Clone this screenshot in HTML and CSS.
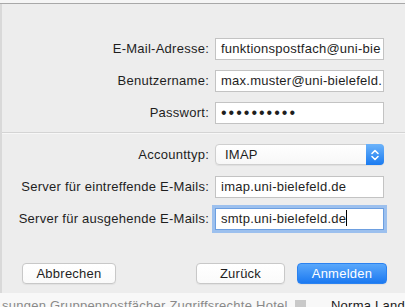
FILE: index.html
```html
<!DOCTYPE html>
<html lang="de">
<head>
  <meta charset="UTF-8">
  <title>Mail-Account hinzufügen</title>
  <link rel="stylesheet" href="styles.css">
</head>
<body>
  <div class="top-edge"></div>

  <!-- Account sheet -->
  <div class="sheet">
    <div class="form">
      <label class="label">E-Mail-Adresse:</label>
      <div class="field">funktionspostfach@uni-bie</div>

      <label class="label">Benutzername:</label>
      <div class="field">max.muster@uni-bielefeld.</div>

      <label class="label">Passwort:</label>
      <div class="field dots">••••••••••</div>
    </div>

    <div class="separator"></div>

    <div class="form">
      <label class="label">Accounttyp:</label>
      <div class="popup">
        <span>IMAP</span>
        <span class="stepper">
          <svg width="10" height="14" viewBox="0 0 10 14">
            <path d="M2 5.5 L5 2.5 L8 5.5 M2 8.5 L5 11.5 L8 8.5" fill="none" stroke="#fff" stroke-width="1.6" stroke-linecap="round" stroke-linejoin="round"/>
          </svg>
        </span>
      </div>

      <label class="label">Server für eintreffende E-Mails:</label>
      <div class="field">imap.uni-bielefeld.de</div>

      <label class="label">Server für ausgehende E-Mails:</label>
      <div class="field focused">smtp.uni-bielefeld.de<span class="caret"></span></div>
    </div>

    <div class="buttons">
      <button class="btn">Abbrechen</button>
      <div class="spacer"></div>
      <button class="btn">Zurück</button>
      <button class="btn primary">Anmelden</button>
    </div>
  </div>

  <!-- Window behind the sheet -->
  <div class="behind">
    <span class="behind-text">sungen Gruppenpostfächer Zugriffsrechte  Hotel</span>
    <span class="behind-box"></span>
    <span class="behind-name">Norma Land</span>
  </div>
</body>
</html>
```

FILE: styles.css
```css
/* Base */
* {
  margin: 0;
  padding: 0;
  box-sizing: border-box;
}

body {
  width: 405px;
  height: 307px;
  overflow: hidden;
  font-family: "Liberation Sans", Arial, sans-serif;
  font-size: 13px;
  letter-spacing: 0.25px;
  color: #1e1e1e;
  background-color: #f4f4f4;
}

.top-edge {
  height: 4px;
  background-color: #f5f5f5;
  border-bottom: 1px solid #a8a8a8;
}

/* Sheet */
.sheet {
  height: 289px;
  padding-top: 34px;
  background-color: #ededed;
  border-left: 2px solid #d9d9d9;
}

.form {
  display: grid;
  grid-template-columns: 207px 169px;
  column-gap: 6px;
  row-gap: 10px;
}

.label {
  height: 22px;
  line-height: 22px;
  text-align: right;
  white-space: nowrap;
}

.field {
  height: 22px;
  line-height: 20px;
  padding: 0 5px;
  background-color: #fff;
  border: 1px solid #c3c3c3;
  white-space: nowrap;
  overflow: hidden;
}

.dots {
  font-size: 16px;
  letter-spacing: 2px;
  line-height: 19px;
}

.focused {
  box-shadow: 0 0 0 3px #9cc0ee;
  border-color: #6d9fe0;
}

.caret {
  display: inline-block;
  width: 1px;
  height: 16px;
  background-color: #000;
  vertical-align: -3px;
}

.separator {
  height: 2px;
  margin: 8px 0 10px;
  border-top: 1px solid #d4d4d4;
  border-bottom: 1px solid #f7f7f7;
}

/* Popup button */
.popup {
  height: 21px;
  display: flex;
  align-items: center;
  justify-content: space-between;
  padding-left: 9px;
  background: linear-gradient(#ffffff, #f7f7f7);
  border: 1px solid #cfcfcf;
  border-radius: 4px;
  box-shadow: 0 1px 1px rgba(0, 0, 0, 0.06);
}

.stepper {
  width: 18px;
  height: 21px;
  margin-right: -1px;
  display: flex;
  align-items: center;
  justify-content: center;
  background: linear-gradient(#6cb3fa, #1a7bf1);
  border-radius: 0 4px 4px 0;
}

/* Buttons */
.buttons {
  display: flex;
  gap: 12px;
  margin-top: 33px;
  padding: 0 18px 0 20px;
}

.spacer {
  flex: 1;
}

.btn {
  height: 21px;
  font-family: inherit;
  font-size: 13px;
  letter-spacing: 0.25px;
  color: #1e1e1e;
  background: linear-gradient(#ffffff, #fafafa);
  border: 1px solid #c8c8c8;
  border-radius: 4px;
  box-shadow: 0 1px 1px rgba(0, 0, 0, 0.05);
}

.btn:nth-child(1) {
  width: 94px;
}

.btn:nth-child(3) {
  width: 89px;
}

.primary {
  width: 90px;
  color: #fff;
  background: linear-gradient(#5aa8fb, #1b79f1);
  border-color: #2b82f0;
}

/* Window behind */
.behind {
  display: flex;
  align-items: flex-start;
  height: 14px;
  padding-top: 5px;
  overflow: hidden;
  white-space: nowrap;
  background-color: #f8f8f8;
}

.behind-text {
  width: 300px;
  padding-left: 2px;
  color: #8a8a8a;
  overflow: hidden;
}

.behind-box {
  width: 11px;
  height: 10px;
  margin: 2px 0 0 2px;
  background-color: #c9c9c9;
}

.behind-name {
  margin-left: 25px;
  color: #1a1a1a;
}
```
